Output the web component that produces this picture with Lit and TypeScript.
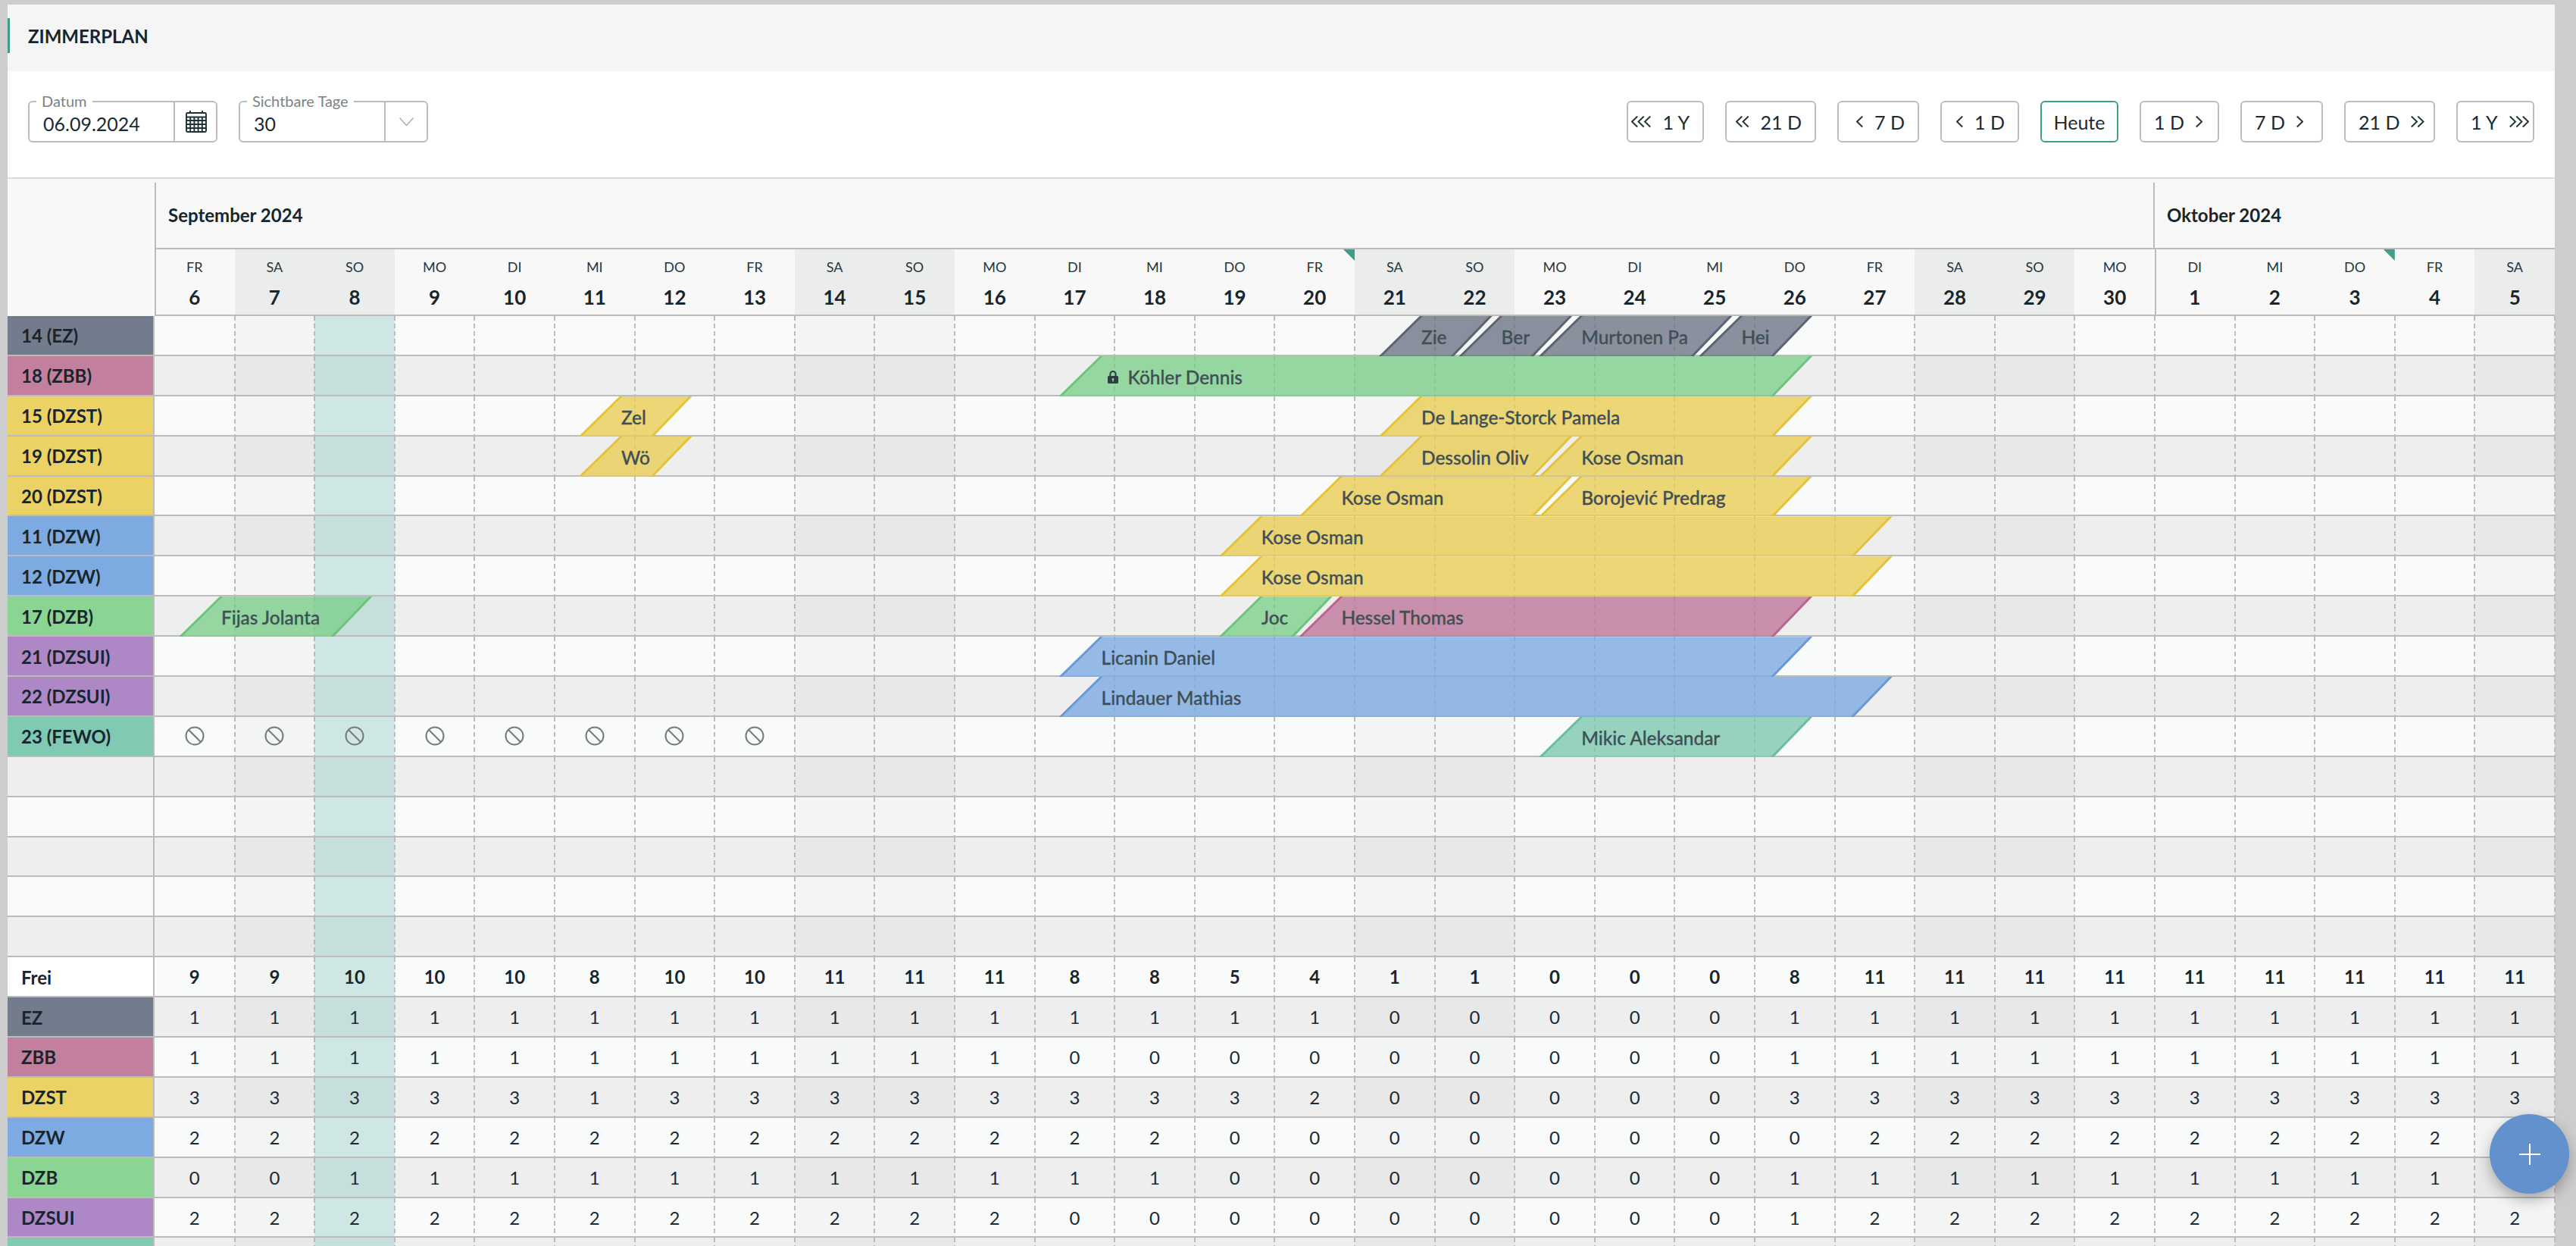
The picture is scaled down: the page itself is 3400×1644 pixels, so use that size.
import { LitElement, html, css, svg } from "lit";
import { customElement } from "lit/decorators.js";

const DOW = ["FR","SA","SO","MO","DI","MI","DO"];
const DAYS = Array.from({ length: 30 }, (_, i) => {
  const d = i < 25 ? i + 6 : i - 24;
  const dow = DOW[i % 7];
  return { d, dow, weekend: dow === "SA" || dow === "SO", today: i === 2, oct: i === 25, first: i === 0, mark: i === 14 || i === 27 };
});

type Bar = { s: number; e: number; t: string; c: string; lock?: boolean };
type Room = { label: string; c: string; bars?: Bar[]; ban?: boolean };

const ROOMS: Room[] = [
  { label: "14 (EZ)", c: "ez", bars: [
    { s: 15, e: 16, t: "Zie", c: "ez" }, { s: 16, e: 17, t: "Ber", c: "ez" },
    { s: 17, e: 19, t: "Murtonen Pa", c: "ez" }, { s: 19, e: 20, t: "Hei", c: "ez" } ] },
  { label: "18 (ZBB)", c: "zbb", bars: [{ s: 11, e: 20, t: "Köhler Dennis", c: "dzb", lock: true }] },
  { label: "15 (DZST)", c: "dzst", bars: [{ s: 5, e: 6, t: "Zel", c: "dzst" }, { s: 15, e: 20, t: "De Lange-Storck Pamela", c: "dzst" }] },
  { label: "19 (DZST)", c: "dzst", bars: [{ s: 5, e: 6, t: "Wö", c: "dzst" }, { s: 15, e: 17, t: "Dessolin Oliv", c: "dzst" }, { s: 17, e: 20, t: "Kose Osman", c: "dzst" }] },
  { label: "20 (DZST)", c: "dzst", bars: [{ s: 14, e: 17, t: "Kose Osman", c: "dzst" }, { s: 17, e: 20, t: "Borojević Predrag", c: "dzst" }] },
  { label: "11 (DZW)", c: "dzw", bars: [{ s: 13, e: 21, t: "Kose Osman", c: "dzst" }] },
  { label: "12 (DZW)", c: "dzw", bars: [{ s: 13, e: 21, t: "Kose Osman", c: "dzst" }] },
  { label: "17 (DZB)", c: "dzb", bars: [{ s: 0, e: 2, t: "Fijas Jolanta", c: "dzb" }, { s: 13, e: 14, t: "Joc", c: "dzb" }, { s: 14, e: 20, t: "Hessel Thomas", c: "zbb" }] },
  { label: "21 (DZSUI)", c: "dzsui", bars: [{ s: 11, e: 20, t: "Licanin Daniel", c: "dzw" }] },
  { label: "22 (DZSUI)", c: "dzsui", bars: [{ s: 11, e: 21, t: "Lindauer Mathias", c: "dzw" }] },
  { label: "23 (FEWO)", c: "fewo", ban: true, bars: [{ s: 17, e: 20, t: "Mikic Aleksandar", c: "fewo" }] },
  { label: "", c: "" }, { label: "", c: "" }, { label: "", c: "" }, { label: "", c: "" }, { label: "", c: "" },
];

const SUMMARY: { label: string; c: string; bold?: boolean; v: number[] }[] = [
  { label: "Frei", c: "frei", bold: true, v: [9,9,10,10,10,8,10,10,11,11,11,8,8,5,4,1,1,0,0,0,8,11,11,11,11,11,11,11,11,11] },
  { label: "EZ", c: "ez", v: [1,1,1,1,1,1,1,1,1,1,1,1,1,1,1,0,0,0,0,0,1,1,1,1,1,1,1,1,1,1] },
  { label: "ZBB", c: "zbb", v: [1,1,1,1,1,1,1,1,1,1,1,0,0,0,0,0,0,0,0,0,1,1,1,1,1,1,1,1,1,1] },
  { label: "DZST", c: "dzst", v: [3,3,3,3,3,1,3,3,3,3,3,3,3,3,2,0,0,0,0,0,3,3,3,3,3,3,3,3,3,3] },
  { label: "DZW", c: "dzw", v: [2,2,2,2,2,2,2,2,2,2,2,2,2,0,0,0,0,0,0,0,0,2,2,2,2,2,2,2,2,2] },
  { label: "DZB", c: "dzb", v: [0,0,1,1,1,1,1,1,1,1,1,1,1,0,0,0,0,0,0,0,1,1,1,1,1,1,1,1,1,1] },
  { label: "DZSUI", c: "dzsui", v: [2,2,2,2,2,2,2,2,2,2,2,0,0,0,0,0,0,0,0,0,1,2,2,2,2,2,2,2,2,2] },
  { label: "", c: "fewo", v: [] },
];

const NAV = [
  { t: "1 Y", n: 3, dir: "l", w: "wy" }, { t: "21 D", n: 2, dir: "l", w: "w21" },
  { t: "7 D", n: 1, dir: "l", w: "w7" }, { t: "1 D", n: 1, dir: "l", w: "w1" },
  { t: "Heute", n: 0, dir: "", w: "wh" },
  { t: "1 D", n: 1, dir: "r", w: "w1r" }, { t: "7 D", n: 1, dir: "r", w: "w7r" },
  { t: "21 D", n: 2, dir: "r", w: "w21" }, { t: "1 Y", n: 3, dir: "r", w: "wyr" },
];

function chevrons(n: number, dir: string) {
  const w = 9 + (n - 1) * 8.5;
  const paths = Array.from({ length: n }, (_, i) => {
    const x = i * 8.5;
    return dir === "l"
      ? svg`<path d="M${x + 8.2} 0.5 L${x + 1} 7.5 L${x + 8.2} 14.5"/>`
      : svg`<path d="M${x + 0.8} 0.5 L${x + 8} 7.5 L${x + 0.8} 14.5"/>`;
  });
  return html`<svg class="chev" width=${w} height="15" viewBox="0 0 ${w} 15">${paths}</svg>`;
}

const calendarIcon = html`<svg width="28" height="29" viewBox="0 0 28 29" class="cal">
  <path d="M6 0V4M22 0V4" />
  <rect x="1" y="3" width="26" height="25" rx="1.5"/>
  <path d="M1 8.5H27M1 13H27M1 18H27M1 23H27M6.2 8.5V28M11.4 8.5V28M16.6 8.5V28M21.8 8.5V28"/>
</svg>`;

const banIcon = html`<svg class="ban" width="26" height="26" viewBox="0 0 26 26">
  <circle cx="13" cy="13" r="11.5"/><path d="M5 5 L21 21"/>
</svg>`;

const lockIcon = html`<svg class="lock" width="14" height="17" viewBox="0 0 14 17">
  <path d="M3.4 7V4.6a3.6 3.6 0 0 1 7.2 0V7" fill="none" stroke="#2c3d44" stroke-width="2"/>
  <path fill-rule="evenodd" d="M1.5 7h11a1.5 1.5 0 0 1 1.5 1.5v7a1.5 1.5 0 0 1-1.5 1.5h-11A1.5 1.5 0 0 1 0 15.5v-7A1.5 1.5 0 0 1 1.5 7ZM7 10a1.4 1.4 0 0 0-.7 2.6V14.5h1.4v-1.9A1.4 1.4 0 0 0 7 10Z" fill="#2c3d44"/>
</svg>`;

@customElement("app-root")
export class AppRoot extends LitElement {
  static styles = css`
    :host {
      display: block; position: relative; width: 3400px; height: 1644px; overflow: hidden;
      box-sizing: border-box; padding: 6px 28px 0 10px; background: #cdcdcd;
      font-family: "Lato", "Liberation Sans", sans-serif; color: #1c2b33;
    }
    .title {
      height: 88px; background: #f5f5f5; display: flex; align-items: center; box-sizing: border-box;
      padding-bottom: 6px;
    }
    .title .accent { width: 3px; height: 46px; background: #3f9e8a; margin-right: 24px; }
    .title h1 { margin: 0; font-size: 24px; font-weight: 700; color: #17262d; letter-spacing: 0; }

    .toolbar {
      height: 142px; box-sizing: border-box; background: #fff; border-bottom: 2px solid #dcdcdc;
      padding: 39px 27px 0 27px; display: flex; justify-content: space-between; align-items: flex-start;
    }
    .group { display: flex; gap: 28px; }
    .field {
      position: relative; width: 250px; height: 55px; box-sizing: border-box; display: flex;
      border: 2px solid #bdbdbd; border-radius: 6px; background: #fff;
    }
    .field .legend {
      position: absolute; left: 9px; top: -14px; padding: 0 7px; background: #fff;
      font-size: 20px; line-height: 24px; color: #7b8386;
    }
    .field .value { flex: 1; padding: 12px 0 0 18px; font-size: 25px; line-height: 32px; color: #1c2b33; }
    .field .addon {
      width: 54px; border-left: 2px solid #bdbdbd; display: flex; align-items: center; justify-content: center;
    }
    .cal { fill: none; stroke: #1f3036; stroke-width: 1.9; margin-left: 2px; }
    .down { fill: none; stroke: #a7aeb1; stroke-width: 1.5; }

    .nav {
      height: 55px; box-sizing: border-box; border: 2px solid #bdbdbd; border-radius: 6px; background: #fff;
      display: flex; align-items: center; gap: 15px; font-size: 25px; color: #1c2b33;
    }
    .nav.l { justify-content: flex-end; padding-right: 17px; }
    .nav.r { justify-content: flex-start; padding-left: 17px; }
    .nav.c { justify-content: center; border-color: #3f9e8a; }
    .wy { width: 102px; } .wyr { width: 103px; } .w21 { width: 120px; } .w7 { width: 108px; } .w7r { width: 109px; }
    .w1 { width: 104px; } .w1r { width: 105px; } .wh { width: 103px; }
    .chev { fill: none; stroke: #26373e; stroke-width: 2; flex: none; }

    .head { display: grid; grid-template-columns: 194px 1fr; background: #f8f8f8; }
    .months { display: grid; grid-template-columns: 25fr 5fr; height: 93px; box-sizing: border-box; padding-top: 5px; border-bottom: 2px solid #bcbcbc; }
    .month { border-left: 2px solid #bcbcbc; padding-left: 16px; font-size: 24px; font-weight: 700; line-height: 24px; display: flex; align-items: center; color: #17262d; }
    .month + .month { margin-left: -2px; }
    .days { display: grid; grid-template-columns: repeat(30, 1fr); height: 88px; box-sizing: border-box; border-bottom: 2px solid #bcbcbc; }
    .dayh { position: relative; text-align: center; display: flex; flex-direction: column; align-items: center; min-width: 0; }
    .dayh.we { background: #ebeded; }
    .dayh.oct, .dayh.first { box-shadow: inset 2px 0 0 #bcbcbc; }
    .dayh .dw { font-size: 18px; line-height: 22px; margin-top: 12px; color: #26363d; }
    .dayh .dn { font-size: 26px; font-weight: 700; line-height: 30px; margin-top: 14px; color: #17262d; }
    .mark { position: absolute; right: 0; top: 0; width: 15px; height: 15px; background: #3f9e8a; clip-path: polygon(0 0, 100% 0, 100% 100%); }

    .row { display: grid; grid-template-columns: 194px 1fr; height: 52.9px; }
    .row .side {
      box-sizing: border-box; border-right: 2px solid #bcbcbc; border-bottom: 2px solid #bcbcbc;
      padding: 1px 0 0 18px; font-size: 24px; font-weight: 700; display: flex; align-items: center; color: #17262d;
    }
    .row.even { background: #f9fafa; } .row.odd { background: #eeeeee; }
    .side.ez { background: #737c8c; } .side.zbb { background: #c27f9e; } .side.dzst { background: #ecd264; }
    .side.dzw { background: #7eaae2; } .side.dzb { background: #8ad494; } .side.dzsui { background: #ad87c6; }
    .side.fewo { background: #80c9b2; } .side.frei { background: #fff; }
    .track { position: relative; display: grid; grid-template-columns: repeat(30, 1fr); min-width: 0; }
    .cell {
      position: relative; box-sizing: border-box; border-bottom: 2px solid #bcbcbc;
      display: flex; align-items: center; justify-content: center; font-size: 24px; color: #1c2b33; min-width: 0;
    }
    .cell::after {
      content: ""; position: absolute; top: 0; bottom: -2px; right: -1px; width: 2px;
      background: repeating-linear-gradient(#bdbdbd 0 6px, transparent 6px 10px);
    }
    .cell.we { background: rgba(0, 0, 0, 0.022); }
    .cell.today { background: rgba(120, 195, 185, 0.33); }
    .cell.b { font-weight: 700; color: #17262d; }
    .ban { fill: none; stroke: #777a7b; stroke-width: 2; }

    .bar { position: absolute; top: 0; bottom: 0; z-index: 1; }
    .bar .fill, .bar .ledge, .bar .redge { position: absolute; inset: 0; }
    .bar .fill { clip-path: polygon(54px 0, 100% 0, calc(100% - 51px) 100%, 0 100%); }
    .bar .ledge { clip-path: polygon(54px 0, 58px 0, 4px 100%, 0 100%); }
    .bar .redge { clip-path: polygon(calc(100% - 4px) 0, 100% 0, calc(100% - 51px) 100%, calc(100% - 55px) 100%); }
    .bar .lab {
      position: absolute; left: 56px; right: 55px; top: 2px; bottom: 0; overflow: hidden; white-space: nowrap;
      display: flex; align-items: center; font-size: 24.4px; font-weight: 500; color: #414f55;
      -webkit-text-stroke: 0.3px #414f55;
    }
    .lock { margin: 0 13px 0 8px; flex: none; }
    .bar.ez .fill { background: rgba(110, 118, 135, 0.8); } .bar.ez .ledge, .bar.ez .redge { background: #5c6472; }
    .bar.dzb .fill { background: rgba(120, 205, 135, 0.75); } .bar.dzb .ledge, .bar.dzb .redge { background: #6cc47c; }
    .bar.dzst .fill { background: rgba(234, 205, 85, 0.8); } .bar.dzst .ledge, .bar.dzst .redge { background: #e4c23a; }
    .bar.zbb .fill { background: rgba(190, 120, 155, 0.8); } .bar.zbb .ledge, .bar.zbb .redge { background: #b8668e; }
    .bar.dzw .fill { background: rgba(125, 170, 225, 0.8); } .bar.dzw .ledge, .bar.dzw .redge { background: #6a98d4; }
    .bar.fewo .fill { background: rgba(125, 200, 175, 0.8); } .bar.fewo .ledge, .bar.fewo .redge { background: #6cbc9f; }

    .fab {
      position: absolute; z-index: 2; right: 9px; bottom: 69px; width: 105px; height: 105px; border-radius: 50%;
      background: #6391cd; display: flex; align-items: center; justify-content: center;
      box-shadow: 0 8px 18px rgba(0, 0, 0, 0.28);
    }
    .fab svg { stroke: #fff; stroke-width: 2; fill: none; }
  `;

  private renderBar(b: Bar) {
    const c = 100 / 30;
    const left = `calc(${b.s * c}% + 32px)`;
    const width = `calc(${(b.e - b.s) * c}% + 44px)`;
    return html`<div class="bar ${b.c}" style="left:${left};width:${width}">
      <div class="fill"></div><div class="ledge"></div><div class="redge"></div>
      <div class="lab">${b.lock ? lockIcon : ""}${b.t}</div>
    </div>`;
  }

  private cellClass(i: number) {
    const d = DAYS[i];
    return `cell${d.weekend && !d.today ? " we" : ""}${d.today ? " today" : ""}`;
  }

  render() {
    return html`
      <div class="title"><span class="accent"></span><h1>ZIMMERPLAN</h1></div>
      <div class="toolbar">
        <div class="group">
          <div class="field">
            <span class="legend">Datum</span><span class="value">06.09.2024</span>
            <span class="addon">${calendarIcon}</span>
          </div>
          <div class="field">
            <span class="legend">Sichtbare Tage</span><span class="value">30</span>
            <span class="addon"><svg class="down" width="19" height="11" viewBox="0 0 19 11"><path d="M0.5 0.5 L9.5 10.5 L18.5 0.5"/></svg></span>
          </div>
        </div>
        <div class="group">
          ${NAV.map((n) => html`<div class="nav ${n.w} ${n.dir || "c"}">
            ${n.dir === "l" ? chevrons(n.n, "l") : ""}<span>${n.t}</span>${n.dir === "r" ? chevrons(n.n, "r") : ""}
          </div>`)}
        </div>
      </div>
      <div class="head">
        <div></div>
        <div>
          <div class="months"><div class="month">September 2024</div><div class="month">Oktober 2024</div></div>
          <div class="days">
            ${DAYS.map((d) => html`<div class="dayh ${d.weekend ? "we" : ""} ${d.oct ? "oct" : ""} ${d.first ? "first" : ""}">
              <span class="dw">${d.dow}</span><span class="dn">${d.d}</span>
              ${d.mark ? html`<span class="mark"></span>` : ""}
            </div>`)}
          </div>
        </div>
      </div>
      ${ROOMS.map((r, ri) => html`<div class="row ${ri % 2 ? "odd" : "even"}">
        <div class="side ${r.c}">${r.label}</div>
        <div class="track">
          ${DAYS.map((_, i) => html`<div class=${this.cellClass(i)}>${r.ban && i < 8 ? banIcon : ""}</div>`)}
          ${(r.bars || []).map((b) => this.renderBar(b))}
        </div>
      </div>`)}
      ${SUMMARY.map((s, si) => html`<div class="row ${si % 2 ? "odd" : "even"}">
        <div class="side ${s.c}">${s.label}</div>
        <div class="track">
          ${DAYS.map((_, i) => html`<div class="${this.cellClass(i)} ${s.bold ? "b" : ""}">${s.v[i] ?? ""}</div>`)}
        </div>
      </div>`)}
      <div class="fab"><svg width="28" height="28" viewBox="0 0 28 28"><path d="M14 0V28M0 14H28"/></svg></div>
    `;
  }
}
